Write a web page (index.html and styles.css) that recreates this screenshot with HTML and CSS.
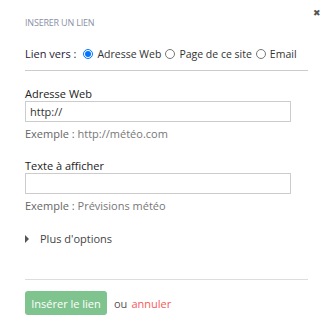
FILE: index.html
```html
<!DOCTYPE html>
<html lang="fr">
<head>
    <meta charset="UTF-8">
    <title>Insérer un lien</title>
    <link rel="stylesheet" href="styles.css">
</head>
<body>
    <div class="dialog">
        <a class="close" href="#">&#10006;</a>
        <h1 class="dialog-title">INSERER UN LIEN</h1>

        <div class="link-type">
            <span class="link-type-label">Lien vers :</span>
            <label><input type="radio" name="type" checked> Adresse Web</label>
            <label><input type="radio" name="type"> Page de ce site</label>
            <label><input type="radio" name="type"> Email</label>
        </div>

        <div class="field">
            <label class="field-label" for="url">Adresse Web</label>
            <input type="text" id="url" value="http://">
            <p class="hint"><span>Exemple :</span> http://météo.com</p>
        </div>

        <div class="field">
            <label class="field-label" for="text">Texte à afficher</label>
            <input type="text" id="text">
            <p class="hint"><span>Exemple :</span> Prévisions météo</p>
        </div>

        <div class="more">
            <span class="arrow"></span> Plus d'options
        </div>

        <div class="actions">
            <button class="btn-insert">Insérer le lien</button>
            <span class="or">ou</span>
            <a class="cancel" href="#">annuler</a>
        </div>
    </div>
</body>
</html>
```

FILE: styles.css
```css
body {
    margin: 0;
    padding: 0;
    background-color: #fff;
    font-family: "Open Sans", Arial, sans-serif;
    color: #333;
}
.dialog {
    position: relative;
    width: 329px;
    height: 335px;
    box-sizing: border-box;
    padding: 17px 21px 0 25px;
}
.close {
    position: absolute;
    top: 6px;
    right: 8px;
    font-size: 9px;
    color: #555;
    text-decoration: none;
}
.dialog-title {
    margin: 0;
    font-size: 9px;
    font-weight: normal;
    color: #8a90a6;
    line-height: 12px;
    letter-spacing: -0.2px;
}
.link-type {
    display: flex;
    align-items: center;
    white-space: nowrap;
    font-size: 10.5px;
    color: #333;
    margin-top: 17px;
    padding-bottom: 9px;
    border-bottom: 1px solid #ccc;
}
.link-type-label {
    color: #2a1838;
    font-size: 11px;
    margin-right: 7px;
}
.link-type label {
    display: flex;
    align-items: center;
    flex-shrink: 0;
    margin-right: 4px;
}
.link-type input {
    width: 10px;
    height: 10px;
    margin: 0 4px 0 0;
}
.field {
    margin-top: 16px;
}
.field + .field {
    margin-top: 18px;
}
.field-label {
    display: block;
    font-size: 11px;
    color: #222;
    line-height: 14px;
    margin-bottom: 0;
}
.field input {
    display: block;
    width: 266px;
    height: 21px;
    box-sizing: border-box;
    border: 1px solid #ccc;
    padding: 0 4px;
    font-family: "Open Sans", Arial, sans-serif;
    font-size: 11px;
    color: #333;
    margin: 0;
}
.hint {
    margin: 5px 0 0;
    font-size: 11px;
    color: #777;
    line-height: 14px;
}
.hint span {
    color: #666;
}
.more {
    display: flex;
    align-items: center;
    margin-top: 18px;
    font-size: 11px;
    color: #444;
    padding-bottom: 33px;
    border-bottom: 1px solid #ddd;
}
.arrow {
    width: 0;
    height: 0;
    border-top: 4px solid transparent;
    border-bottom: 4px solid transparent;
    border-left: 4px solid #555;
    margin-right: 11px;
}
.actions {
    display: flex;
    align-items: center;
    margin-top: 11px;
    font-size: 11px;
}
.btn-insert {
    background-color: #7fc48f;
    color: #fff;
    border: none;
    border-radius: 3px;
    width: 82px;
    height: 24px;
    padding: 0;
    font-family: "Open Sans", Arial, sans-serif;
    font-size: 11px;
}
.or {
    color: #555;
    margin-left: 7px;
}
.cancel {
    color: #f55a5a;
    text-decoration: none;
    margin-left: 4px;
}
```
